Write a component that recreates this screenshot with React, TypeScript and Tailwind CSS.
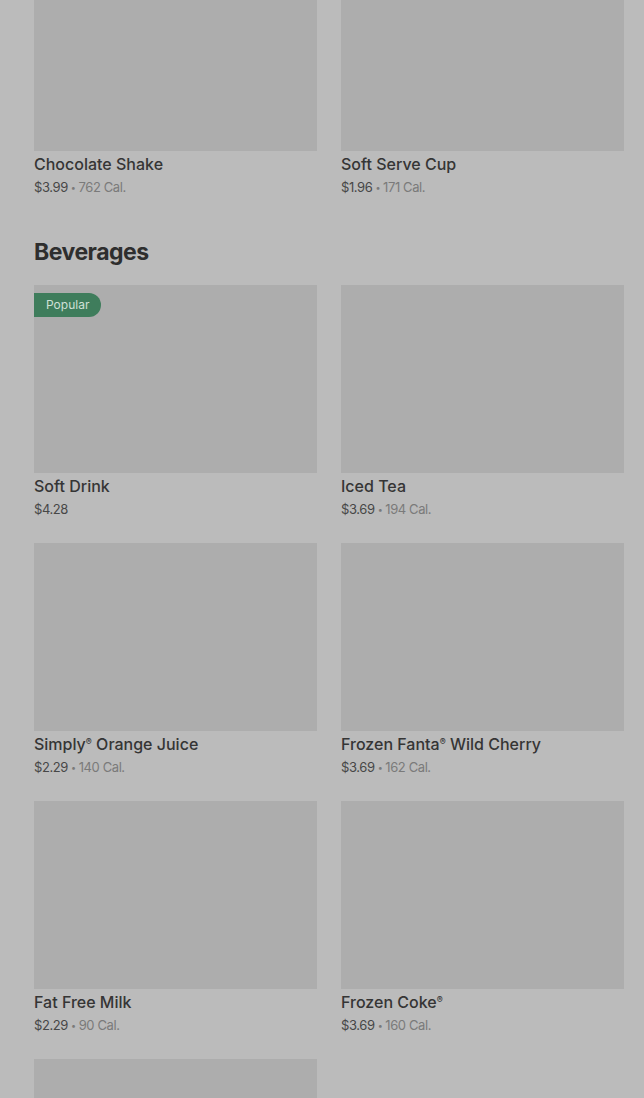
import React from 'react'

type Item = { name: string; price: string; cal?: string; popular?: boolean }

const DESSERTS: Item[] = [
  { name: 'Chocolate Shake', price: '$3.99', cal: '762 Cal.' },
  { name: 'Soft Serve Cup', price: '$1.96', cal: '171 Cal.' },
]

const BEVERAGES: Item[] = [
  { name: 'Soft Drink', price: '$4.28', popular: true },
  { name: 'Iced Tea', price: '$3.69', cal: '194 Cal.' },
  { name: 'Simply® Orange Juice', price: '$2.29', cal: '140 Cal.' },
  { name: 'Frozen Fanta® Wild Cherry', price: '$3.69', cal: '162 Cal.' },
  { name: 'Fat Free Milk', price: '$2.29', cal: '90 Cal.' },
  { name: 'Frozen Coke®', price: '$3.69', cal: '160 Cal.' },
  { name: '', price: '' },
]

function Sup({ text }: { text: string }) {
  // render ® a bit smaller and raised
  const parts = text.split('®')
  return (
    <>
      {parts.map((p, i) => (
        <React.Fragment key={i}>
          {p}
          {i < parts.length - 1 && <sup className="text-[9px] leading-none -top-[0.6em]">®</sup>}
        </React.Fragment>
      ))}
    </>
  )
}

function Card({ item }: { item: Item }) {
  return (
    <div className="flex flex-col">
      <div className="relative h-[188px] bg-[#adadad]">
        {item.popular && (
          <span className="absolute left-0 top-2 h-6 px-3 flex items-center rounded-r-full bg-[#3f7d5c] text-[12px] text-[#cfe0d6]">
            Popular
          </span>
        )}
      </div>
      {item.name && (
        <div className="pt-[3px] pb-[23px]">
          <div className="h-5 text-[16px] leading-[20px] font-medium text-[#353535]">
            <Sup text={item.name} />
          </div>
          <div className="mt-[3px] text-[13px] leading-[20px] tracking-[-0.4px] text-[#474747]">
            {item.price}
            {item.cal && (
              <span className="text-[#7a7a7a]">
                <span className="mx-[3px] text-[9px] align-[1px]">•</span>
                {item.cal}
              </span>
            )}
          </div>
        </div>
      )}
    </div>
  )
}

export default function App() {
  return (
    <div
      className="h-[1098px] bg-[#bbbbbb] overflow-hidden"
      style={{ fontFamily: 'Inter, "Noto Sans", sans-serif' }}
    >
      <div className="-mt-[37px] pl-[34px] pr-[20px]">
        <div className="grid grid-cols-2 gap-x-6">
          {DESSERTS.map((it) => (
            <Card key={it.name} item={it} />
          ))}
        </div>

        <h2 className="mt-[15px] mb-[17px] text-[23px] leading-[32px] font-bold tracking-[-0.5px] text-[#2e2e2e]">
          Beverages
        </h2>

        <div className="grid grid-cols-2 gap-x-6">
          {BEVERAGES.map((it, i) => (
            <Card key={i} item={it} />
          ))}
        </div>
      </div>
    </div>
  )
}
